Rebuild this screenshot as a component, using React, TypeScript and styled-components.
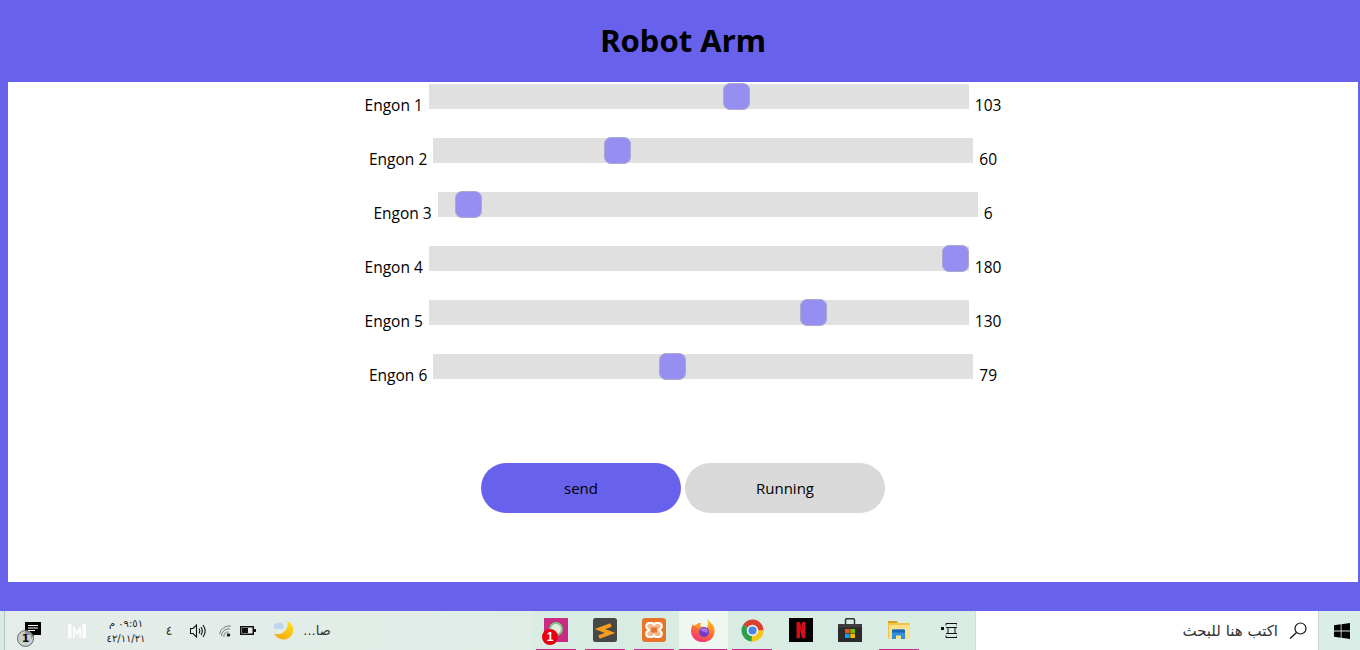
import React from "react";
import styled, { createGlobalStyle } from "styled-components";

const Global = createGlobalStyle`
  html, body { margin: 0; padding: 0; height: 650px; overflow: hidden; background: #6761ec; }
  #root { height: 650px; }
`;
const Page = styled.div`
  height: 650px; display: flex; flex-direction: column; background: #6761ec;
  font-family: "Open Sans", "Noto Sans", sans-serif; color: #000;
`;
const Header = styled.header`
  height: 82px; display: flex; align-items: center; justify-content: center;
  padding-left: 6px;
`;
const Title = styled.h1`
  margin: 0 0 3px; font-size: 31px; line-height: 42px; font-weight: 700; font-family: "Noto Sans", sans-serif;
`;
const Panel = styled.main`
  height: 498px; margin: 0 2px 0 8px; padding-top: 2px; background: #fff; display: flex; flex-direction: column; align-items: center;
`;
const Row = styled.div`
  height: 54px; display: flex; align-items: flex-start; gap: 6px;
`;
const Label = styled.span`
  font-size: 15.5px; line-height: 22px; margin-top: 10px; white-space: nowrap;
`;
const Track = styled.div`
  position: relative; width: 540px; height: 25px; background: #e0e0e0;
`;
const Thumb = styled.div`
  position: absolute; top: -1px; width: 27px; height: 27px; box-sizing: border-box;
  background: #968ff1; border: 1px solid #a9a8cf; border-radius: 7px;
`;
const Buttons = styled.div`
  display: flex; gap: 4px; margin-top: 55px;
`;
const Pill = styled.button<{ $primary?: boolean }>`
  width: 200px; height: 50px; border: 0; border-radius: 25px; font: inherit; font-size: 15px; color: #000;
  background: ${p => (p.$primary ? "#6761ec" : "#d9d9d9")};
`;
const Spacer = styled.div`flex: 1;`;
const Taskbar = styled.footer`
  height: 39px; display: flex; align-items: stretch; background: #d9ece4; font-family: "DejaVu Sans", sans-serif; position: relative;
`;
const TrayZone = styled.div`
  width: 528px; margin-left: 4px; border-left: 1px solid #b9c4c0; background: linear-gradient(90deg, #e5ece9, #e0ede7); display: flex; align-items: center; box-sizing: border-box;
  position: relative; flex: none;
`;
const TraySlot = styled.div<{ $w: number }>`
  width: ${p => p.$w}px; display: flex; justify-content: center; align-items: center; flex: none;
`;
const Clock = styled.div`
  font-size: 10px; line-height: 15px; text-align: center; color: #222; white-space: nowrap;
`;
const TrayText = styled.span`
  font-size: 13px; color: #333;
`;
const Badge1 = styled.div`
  position: absolute; left: 12px; top: 19px; width: 17px; height: 17px; border-radius: 50%; box-sizing: border-box;
  background: rgba(190, 196, 193, 0.75); border: 1px solid #6a6a6a; font-size: 11px; font-weight: 700; line-height: 15px; text-align: center; color: #111;
`;
const Apps = styled.div`
  display: flex; width: 443px; flex: none; background: #d9ece4;
`;
const AppSlot = styled.div<{ $active?: boolean; $line?: boolean }>`
  position: relative; width: 49px; flex: none; display: flex; align-items: center; justify-content: center; padding: 0 1px 1px 0; box-sizing: border-box;
  background: ${p => (p.$active ? "#eff7f3" : "transparent")};
  &:last-child { flex: 1; }
  &::after {
    content: ""; display: ${p => (p.$line ? "block" : "none")}; position: absolute; left: ${p => (p.$active ? "0" : "4px")}; right: ${p => (p.$active ? "1px" : "5px")}; bottom: 0; height: 1px; background: #cc2a8d;
  }
`;
const RedBadge = styled.div`
  position: absolute; left: 10px; top: 18px; width: 16px; height: 16px; border-radius: 50%; background: #e8000f; color: #fff;
  font-size: 12px; line-height: 16px; text-align: center; font-weight: 700; font-family: "Liberation Sans", sans-serif;
`;
const SearchBox = styled.div`
  width: 343px; flex: none; background: #fff; display: flex; align-items: center; justify-content: flex-end; gap: 11px; padding-right: 11px; box-sizing: border-box; border-left: 1px solid #cfdcd6;
`;
const SearchText = styled.span`
  font-size: 15px; color: #333; direction: rtl;
`;
const Start = styled.div`
  flex: 1; display: flex; align-items: center; justify-content: center; padding-left: 5px; border-left: 1px solid #c8d6cf; background: #d9eee6;
`;

const rows = [
  { name: "Engon 1", v: 103 },
  { name: "Engon 2", v: 60 },
  { name: "Engon 3", v: 6 },
  { name: "Engon 4", v: 180 },
  { name: "Engon 5", v: 130 },
  { name: "Engon 6", v: 79 },
];

const Chat = () => (
  <svg width="16" height="17" viewBox="0 0 16 17"><path d="M0 0h16v13H9l-3 4v-4H0z" fill="#000" /><path d="M3 3.500h10M3 6h10M3 8.500h7" stroke="#fff" strokeWidth="1" /></svg>
);
const MLogo = () => (
  <svg width="18" height="14" viewBox="0 0 18 14"><path d="M0 0h3.500v14H0zM14.500 0H18v14h-3.500zM5 3h1.500L9 8l2.500-5H13v11h-1.500V7L9 12 6.500 7v7H5z" fill="#fff" opacity=".9" /></svg>
);
const Speaker = () => (
  <svg width="16" height="14" viewBox="0 0 16 14" fill="none" stroke="#111" strokeWidth="1.100"><path d="M.5 4.500h2.500L6.500 1v12L3 9.500H.5z" /><path d="M9 4.500c.9 1.500.9 3.500 0 5M11 3c1.600 2.500 1.600 5.500 0 8M13 1c2.600 3.600 2.600 8.400 0 12" /></svg>
);
const Wifi = () => (
  <svg width="13" height="12" viewBox="0 0 13 12" fill="none" stroke="#777" strokeWidth="1"><path d="M.5 9A10 10 0 0 1 12 1" /><path d="M2.500 11A7 7 0 0 1 11 4" /><path d="M5 12A4 4 0 0 1 9.500 7" /><circle cx="9.500" cy="10" r="1.800" fill="#222" stroke="none" /></svg>
);
const Battery = () => (
  <svg width="16" height="9" viewBox="0 0 16 9"><rect x=".75" y=".75" width="12.500" height="7.500" fill="none" stroke="#111" strokeWidth="1.500" /><rect x="2" y="2" width="6" height="5" fill="#111" /><rect x="14" y="3" width="2" height="3" fill="#111" /></svg>
);
const Moon = () => (
  <svg width="20" height="19" viewBox="0 0 20 19">
    <defs><linearGradient id="moonfill" x1="0.8" y1="0" x2="0.2" y2="1"><stop offset="0" stopColor="#ffe21a" /><stop offset="1" stopColor="#f9a60a" /></linearGradient></defs>
    <path d="M13 0c5 2 7 7 6 11-1 5-6 8-10.500 7.500C4.500 18 1.500 15.500.5 12.500c5 2 10-.5 12.500-5.500.8-2.500 1-5 0-7z" fill="url(#moonfill)" />
    <path d="M1.500 8h7a2.200 2.200 0 0 0 .3-4.200 3 3 0 0 0-5.300-1.200A2.800 2.800 0 0 0 1.500 8z" fill="#bcd8f0" />
  </svg>
);
const WhatsApp = () => (
  <svg width="24" height="24" viewBox="0 0 24 24"><rect width="24" height="24" fill="#c92a83" /><circle cx="12" cy="11" r="6" fill="#e2eedd" stroke="#7cc97f" strokeWidth="2" /></svg>
);
const Sublime = () => (
  <svg width="24" height="24" viewBox="0 0 24 24"><rect width="24" height="24" rx="2.500" fill="#474747" /><path d="M18 7 7 11l10 4L6 19" fill="none" stroke="#f89c1c" strokeWidth="3.800" /></svg>
);
const Xampp = () => (
  <svg width="24" height="24" viewBox="0 0 24 24"><rect width="24" height="24" rx="3" fill="#e4752b" /><path d="M7.500 5H10.500l1.500 1.500L13.500 5h3c3.500 0 4.500 4.500 1.500 6l-1 1 1 1c3 1.500 2 6-1.500 6h-3L12 17.500 10.500 19h-3c-3.500 0-4.500-4.500-1.500-6l1-1-1-1C3 9.500 4 5 7.500 5z" fill="#f3b98f" stroke="#fff" strokeWidth="2" /><rect x="9" y="9.500" width="6" height="5" fill="#e4752b" /></svg>
);
const Firefox = () => (
  <svg width="24" height="24" viewBox="0 0 24 24">
    <defs>
      <linearGradient id="ffbody" x1="0.8" y1="0" x2="0.3" y2="1"><stop offset="0" stopColor="#ffd21e" /><stop offset="0.45" stopColor="#ff7a2a" /><stop offset="1" stopColor="#f2317e" /></linearGradient>
    </defs>
    <path d="M16 0c1 3 5 5 7 9 2 6-1 14-9 15C6 25 0 20 0 13c0-3 1-5 2-7 0 1 1 2 2 2 2-2 4-3 6-3-1 2-2 3 0 4 2 0 4 0 5 2 3-3 2-8 1-11z" fill="url(#ffbody)" />
    <circle cx="13" cy="14" r="5" fill="#6d3bc8" />
    <path d="M9 12c1-2 5-3 7-1 1 1 1 3 0 4-1-1-4-1-7-3z" fill="#a974e8" />
    <path d="M3 8c2-2 5-3 7-3-1 2-1 3 1 4l-3 2c-1-1-3-2-5-3z" fill="#ff9a24" />
  </svg>
);
const Chrome = () => (
  <svg width="23" height="23" viewBox="0 0 24 24">
    <path d="M12 12 2.050 6.250A11.500 11.500 0 0 1 23.500 12z" fill="#d8402f" />
    <path d="M12 12H23.500A11.500 11.500 0 0 1 11 23.450z" fill="#f5c518" />
    <path d="M12 12 11 23.450A11.500 11.500 0 0 1 2.050 6.250z" fill="#2f9e48" />
    <circle cx="12" cy="12" r="6" fill="#f2f2f2" />
    <circle cx="12" cy="12" r="4.300" fill="#4a86e8" />
  </svg>
);
const Netflix = () => (
  <svg width="24" height="24" viewBox="0 0 24 24"><rect width="24" height="24" fill="#000" /><path d="M7.500 4H11l2 8V4h3.500v16.500L13 20l-2-8v8l-3.500.5z" fill="#d50f19" /></svg>
);
const Store = () => (
  <svg width="24" height="24" viewBox="0 0 24 24"><path d="M7.500 6V2A1.500 1.500 0 0 1 9 .7h6A1.500 1.500 0 0 1 16.500 2v4" fill="none" stroke="#333" strokeWidth="1.500" /><path d="M0 6h24v18H0z" fill="#2b2b2b" /><path d="M0 6h24v3.500H0z" fill="#3d3d3d" /><path d="M7 11h4.700v4.300H7z" fill="#f25022" /><path d="M12.300 11H17v4.300h-4.700z" fill="#7fba00" /><path d="M7 15.800h4.700V20H7z" fill="#00a4ef" /><path d="M12.300 15.800H17V20h-4.700z" fill="#ffb900" /></svg>
);
const Folder = () => (
  <svg width="22" height="18" viewBox="0 0 22 18"><path d="M0 0h9l1 2.500H0z" fill="#d69f22" /><path d="M0 2h21.500v15.500H0z" fill="#f1c34a" /><path d="M1 4h21v13.500H1z" fill="#fbe08c" /><path d="M4 10c0-1 .5-1.500 1.500-1.500h10c1 0 1.500.5 1.500 1.500v8h-4v-3.500H8V18H4z" fill="#2f8fd8" /><path d="M4 10c0-1 .5-1.500 1.500-1.500h10c1 0 1.500.5 1.500 1.500v1.500H4z" fill="#1769b8" /></svg>
);
const TaskView = () => (
  <svg width="16" height="15" viewBox="0 0 16 15" fill="none" stroke="#111"><path d="M0 4h3v3H0z" fill="#111" stroke="none" /><path d="M5 .5h11M5 14.500h11M5 4.500h11M5 10.500h11M7 4.500v6M14 4.500v6M5 .5v2M16 .5v2M5 14.500v-2M16 14.500v-2" /></svg>
);
const WinLogo = () => (
  <svg width="16" height="16" viewBox="0 0 16 16"><path d="M0 2.200 6.700 1.300v6.300H0zM7.500 1.200 16 0v7.600H7.500zM0 8.400h6.700v6.300L0 13.800zM7.500 8.400H16V16l-8.500-1.200z" fill="#000" /></svg>
);
const Magnifier = () => (
  <svg width="18" height="17" viewBox="0 0 18 17" fill="none" stroke="#111" strokeWidth="1.200"><circle cx="11.500" cy="6.500" r="5.500" /><path d="M7.500 10.500 1 16.500" /></svg>
);

const apps = [
  { key: "wa", C: WhatsApp, line: true },
  { key: "sub", C: Sublime, line: true },
  { key: "xa", C: Xampp, line: true },
  { key: "ff", C: Firefox, line: true, active: true },
  { key: "ch", C: Chrome, line: true },
  { key: "nf", C: Netflix },
  { key: "st", C: Store },
  { key: "fo", C: Folder, line: true },
  { key: "tv", C: TaskView },
];

export default function App() {
  return (
    <Page>
      <Global />
      <Header><Title>Robot Arm</Title></Header>
      <Panel>
        {rows.map(r => (
          <Row key={r.name}>
            <Label>{r.name}</Label>
            <Track>
              <Thumb style={{ left: `${Math.floor((r.v / 180) * 513 + 0.85)}px` }} />
            </Track>
            <Label>{r.v}</Label>
          </Row>
        ))}
        <Buttons>
          <Pill $primary>send</Pill>
          <Pill>Running</Pill>
        </Buttons>
      </Panel>
      <Spacer />
      <Taskbar>
        <TrayZone>
          <TraySlot $w={56}><Chat /></TraySlot>
          <Badge1>1</Badge1>
          <TraySlot $w={32}><MLogo /></TraySlot>
          <TraySlot $w={66}><Clock>٠٩:٥١ م<br />٤٢/١١/٢١</Clock></TraySlot>
          <TraySlot $w={20}><TrayText>٤</TrayText></TraySlot>
          <TraySlot $w={38}><Speaker /></TraySlot>
          <TraySlot $w={16}><Wifi /></TraySlot>
          <TraySlot $w={30}><Battery /></TraySlot>
          <TraySlot $w={42}><Moon /></TraySlot>
          <TraySlot $w={24}><TrayText>...صا</TrayText></TraySlot>
        </TrayZone>
        <Apps>
          {apps.map(a => (
            <AppSlot key={a.key} $active={a.active} $line={a.line}>
              <a.C />
              {a.key === "wa" && <RedBadge>1</RedBadge>}
            </AppSlot>
          ))}
        </Apps>
        <SearchBox>
          <SearchText>اكتب هنا للبحث</SearchText>
          <Magnifier />
        </SearchBox>
        <Start><WinLogo /></Start>
      </Taskbar>
    </Page>
  );
}
